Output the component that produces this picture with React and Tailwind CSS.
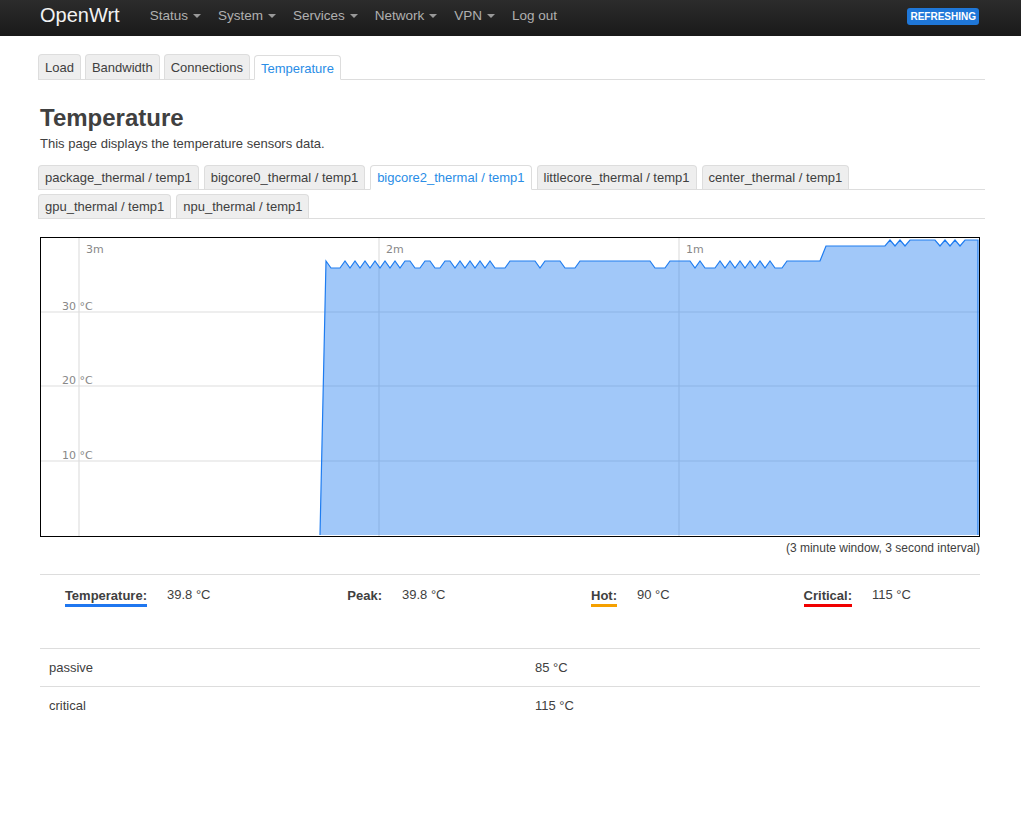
import React from 'react'

const font = { fontFamily: '"Liberation Sans", Arial, sans-serif' }

const menu = [
  { label: 'Status', caret: true },
  { label: 'System', caret: true },
  { label: 'Services', caret: true },
  { label: 'Network', caret: true },
  { label: 'VPN', caret: true },
  { label: 'Log out', caret: false },
]

const topTabs = ['Load', 'Bandwidth', 'Connections', 'Temperature']

const sensorRows = [
  ['package_thermal / temp1', 'bigcore0_thermal / temp1', 'bigcore2_thermal / temp1', 'littlecore_thermal / temp1', 'center_thermal / temp1'],
  ['gpu_thermal / temp1', 'npu_thermal / temp1'],
]

// chart points in page coordinates
const pts = [
  [320, 535], [326, 261], [331, 268], [340, 268], [345, 261], [350, 268], [355, 261], [360, 268], [365, 261],
  [370, 268], [375, 261], [380, 268], [385, 261], [390, 268], [395, 261], [400, 268], [405, 261], [410, 261],
  [415, 268], [420, 268], [425, 261], [430, 261], [435, 268], [440, 268], [445, 261], [450, 261], [455, 268],
  [460, 261], [465, 268], [470, 261], [475, 268], [480, 261], [485, 268], [490, 261], [495, 268], [505, 268],
  [510, 261], [535, 261], [540, 268], [545, 261], [560, 261], [565, 268], [575, 268], [580, 261], [650, 261],
  [655, 268], [665, 268], [670, 261], [690, 261], [695, 268], [700, 261], [705, 268], [715, 268], [720, 261],
  [725, 268], [730, 261], [735, 268], [740, 261], [745, 268], [750, 261], [755, 268], [760, 261], [765, 268],
  [770, 261], [775, 268], [782, 268], [787, 261], [820, 261], [826, 246], [885, 246], [890, 240], [895, 246],
  [900, 240], [905, 246], [910, 240], [935, 240], [940, 246], [945, 240], [950, 246], [955, 240], [960, 246],
  [965, 240], [978, 240], [978, 535],
]

function Chart() {
  const d = 'M' + pts.map(([x, y]) => `${x} ${y}`).join(' L')
  return (
    <div className="w-[940px] h-[300px] border border-black bg-white">
      <svg width="938" height="298" viewBox="41 238 938 298" className="block">
        {[79, 379, 679].map((x) => (
          <line key={x} x1={x} y1={238} x2={x} y2={536} stroke="#e6e6e6" strokeWidth="1.5" />
        ))}
        {[312, 386, 461].map((y) => (
          <line key={y} x1={41} y1={y} x2={979} y2={y} stroke="#ddd" strokeWidth="1" />
        ))}
        <path d={d + ' Z'} fill="#1e7cf0" fillOpacity="0.42" stroke="none" />
        <path d={d} fill="none" stroke="#1e7cf0" strokeWidth="1.2" />
        <g fill="#888" fontSize="11" fontFamily="'DejaVu Sans', sans-serif">
          <text x="86" y="253">3m</text>
          <text x="386" y="253">2m</text>
          <text x="686" y="253">1m</text>
          <text x="62" y="310">30 °C</text>
          <text x="62" y="384">20 °C</text>
          <text x="62" y="459">10 °C</text>
        </g>
      </svg>
    </div>
  )
}

function Legend({ label, value, color }) {
  return (
    <>
      <div className="text-right">
        <span
          className="font-bold text-[13px] text-[#404040] pb-[1px] border-b-[3px]"
          style={{ borderColor: color || 'transparent' }}
        >
          {label}
        </span>
      </div>
      <div className="pl-[20px] text-[13px] text-[#404040]">{value}</div>
    </>
  )
}

export default function App() {
  return (
    <div className="min-h-screen bg-white text-[#404040]" style={font}>
      {/* Navbar */}
      <header className="h-[36px] bg-gradient-to-b from-[#2c2c2c] to-[#1a1a1a] flex items-center pl-[40px] pr-[42px] pb-[4px]">
        <span className="text-[20px] text-[#f2f2f2] mr-[30px] leading-none mt-[-3px]">OpenWrt</span>
        <nav className="flex items-center gap-[17px]">
          {menu.map((m) => (
            <span key={m.label} className="flex items-center text-[13.5px] text-[#b0b0b0]">
              {m.label}
              {m.caret && (
                <svg width="8" height="5" viewBox="0 0 8 5" className="ml-[5px] mt-[1px]">
                  <path d="M0 0 L8 0 L4 4 Z" fill="#999" />
                </svg>
              )}
            </span>
          ))}
        </nav>
        <div className="ml-auto">
          <span className="block bg-[#1f77d8] text-white font-bold text-[10px] px-[3px] py-[2px] rounded-[3px] leading-[13px]">
            REFRESHING
          </span>
        </div>
      </header>

      <main className="pl-[40px] w-[985px] pt-[19px]">
        {/* Top tabs */}
        <div className="flex border-b border-[#ddd] h-[25px] gap-[4px] ml-[-2px] items-end">
          {topTabs.map((t) => {
            const active = t === 'Temperature'
            return (
              <div
                key={t}
                className={`h-[25px] px-[6px] text-[13px] leading-[25px] border border-[#ddd] rounded-t-[4px] ${
                  active ? 'bg-white text-[#2a8de6] border-b-white -mb-px' : 'bg-[#eee] text-[#404040] border-b-0'
                }`}
              >
                {t}
              </div>
            )
          })}
        </div>

        <h2 className="text-[24px] font-bold mt-[23px] leading-[30px] text-[#404040]">Temperature</h2>
        <p className="text-[13px] mt-[2px] leading-[18px]">This page displays the temperature sensors data.</p>

        {/* Sensor tabs */}
        <div className="mt-[12px] ml-[-2px]">
          {sensorRows.map((row, i) => (
            <div key={i} className="flex gap-[5px] border-b border-[#ddd] h-[25px] mt-[4px] items-end">
              {row.map((t) => {
                const active = t === 'bigcore2_thermal / temp1'
                return (
                  <div
                    key={t}
                    className={`h-[24px] px-[6px] text-[13px] leading-[23px] border border-[#ddd] rounded-t-[4px] ${
                      active ? 'bg-white text-[#2a8de6] border-b-white -mb-px h-[25px]' : 'bg-[#eee] text-[#404040] border-b-0'
                    }`}
                  >
                    {t}
                  </div>
                )
              })}
            </div>
          ))}
        </div>

        <div className="mt-[18px]">
          <Chart />
          <div className="w-[940px] text-right text-[12px] mt-[3px] leading-[16px]">
            (3 minute window, 3 second interval)
          </div>
        </div>

        {/* Legend */}
        <div className="w-[940px] border-t border-[#ddd] mt-[18px] pt-[11px] pb-[43px] grid grid-cols-[107px_128px_107px_128px_107px_128px_107px_128px] leading-[18px]">
          <Legend label="Temperature:" value="39.8 °C" color="#1f77f0" />
          <Legend label="Peak:" value="39.8 °C" />
          <Legend label="Hot:" value="90 °C" color="#f5a000" />
          <Legend label="Critical:" value="115 °C" color="#f00000" />
        </div>

        {/* Trip points */}
        <div className="w-[940px] text-[13px]">
          {[
            ['passive', '85 °C'],
            ['critical', '115 °C'],
          ].map(([k, v]) => (
            <div key={k} className="grid grid-cols-[487px_1fr] border-t border-[#ddd] h-[38px] items-center">
              <div className="pl-[9px]">{k}</div>
              <div className="pl-[8px]">{v}</div>
            </div>
          ))}
        </div>
      </main>
    </div>
  )
}
